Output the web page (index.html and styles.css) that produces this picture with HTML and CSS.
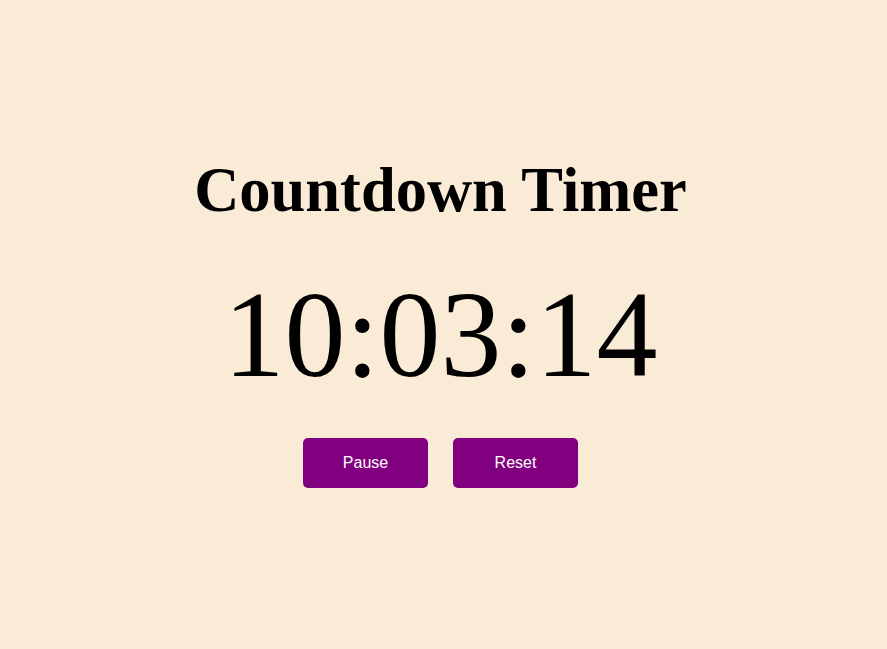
FILE: index.html
```html
<!DOCTYPE html>
<html>
<head>
<meta charset="utf-8">
<link rel="stylesheet" href="styles.css">
</head>
<body>
<div class="container">
  <h1 class="title">Countdown Timer</h1>
  <div class="timer">10:03:14</div>
  <div class="controls">
    <button class="btn">Pause</button>
    <button class="btn">Reset</button>
  </div>
</div>
</body>
</html>
```

FILE: styles.css
```css
html, body {
  margin: 0;
  padding: 0;
  height: 100%;
}
body {
  background: #faebd7;
  font-family: "Liberation Serif", "Times New Roman", serif;
  color: #000;
}
.container {
  height: 100vh;
  box-sizing: border-box;
  padding: 0 6px 8px 0;
  display: flex;
  flex-direction: column;
  align-items: center;
  justify-content: center;
}
.title {
  font-size: 62.5px;
  font-weight: bold;
  margin: 0 0 38px;
}
.timer {
  font-size: 122px;
  margin: 0 0 33px;
}
.controls {
  display: flex;
  gap: 25px;
}
.btn {
  width: 125px;
  height: 50px;
  background: #800080;
  color: #fff;
  border: none;
  border-radius: 5px;
  font-family: "Liberation Sans", Arial, sans-serif;
  font-size: 16px;
}
```
